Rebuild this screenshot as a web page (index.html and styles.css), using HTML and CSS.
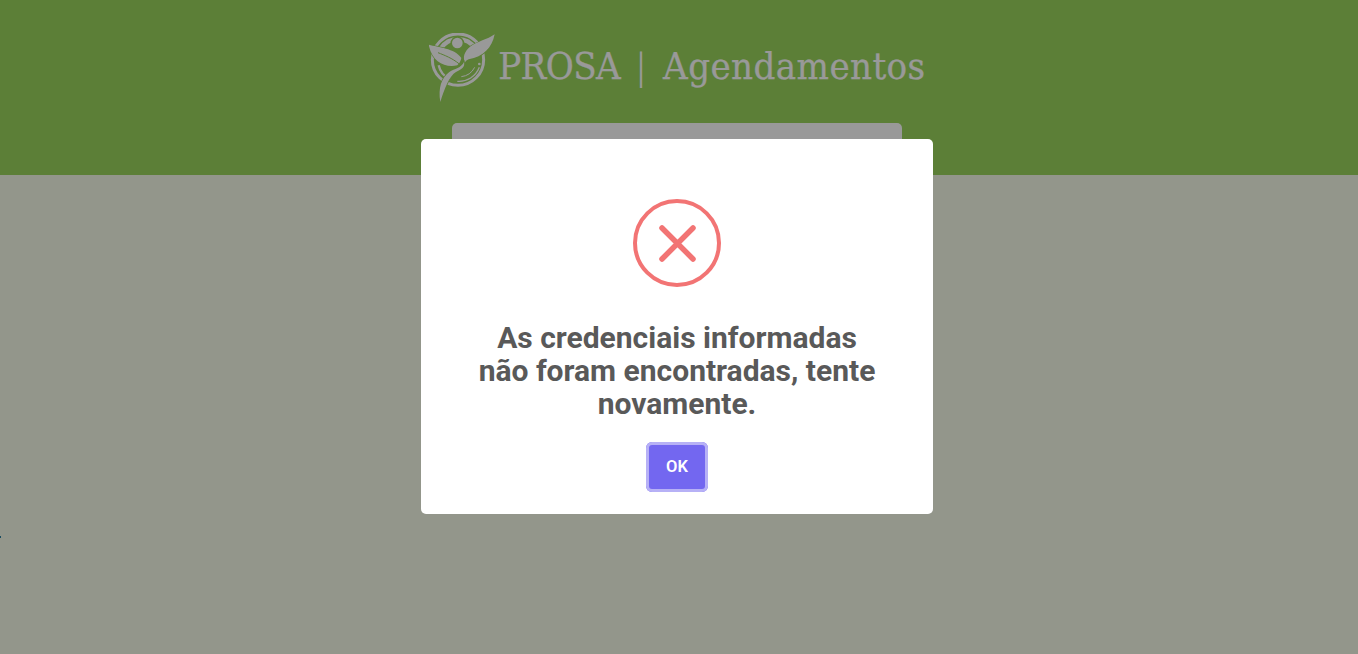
FILE: index.html
```html
<!DOCTYPE html>
<html lang="pt">
<head>
<meta charset="utf-8">
<title>PROSA | Agendamentos</title>
<link rel="stylesheet" href="styles.css">
</head>
<body>
<header class="hero">
  <div class="brand">
    <svg class="logo" viewBox="15 25 200 210" aria-hidden="true">
      <g fill="none" stroke="#fff">
        <circle cx="102" cy="105" r="77" stroke-width="9"/>
        <path d="M50 72A62 62 0 0 1 154 72" stroke-width="13"/>
        <path d="M44 122A60 60 0 0 0 78 164" stroke-width="7"/>
        <path d="M166 128A65 65 0 0 1 100 170" stroke-width="4"/>
        <path d="M152 128A52 52 0 0 1 112 156" stroke-width="3"/>
      </g>
      <circle cx="100" cy="56" r="21" fill="#99d45c"/>
      <circle cx="100" cy="55" r="16" fill="#fff"/>
      <circle cx="166" cy="118" r="4" fill="#fff"/>
      <g fill="#fff" stroke="#99d45c" stroke-width="4" paint-order="stroke">
        <path d="M14 60C40 68 92 70 112 100 110 110 106 116 100 122 62 130 24 112 14 60Z"/>
        <path d="M212 29C204 70 178 96 134 104 128 106 124 110 122 116 116 100 120 80 140 65 160 50 190 45 212 29Z"/>
        <path d="M120 112C124 128 112 134 96 142 76 154 62 190 49 232 42 190 52 160 76 142 92 132 112 130 120 112Z"/>
      </g>
      <path fill="none" stroke="#99d45c" stroke-width="3" d="M42 84C62 92 84 100 106 118"/>
      <path fill="none" stroke="#99d45c" stroke-width="3" d="M112 82C116 92 118 100 120 110"/>
    </svg>
    <h1 class="title"><span class="name">PROSA</span><span class="bar">|</span><span class="product">Agendamentos</span></h1>
  </div>
  <div class="login-card"></div>
</header>
<main class="content"></main>
<span class="speck"></span>
<div class="overlay">
  <section class="dialog" role="alertdialog">
    <svg class="error-icon" viewBox="0 0 88 88" aria-hidden="true">
      <circle cx="44" cy="44" r="42" fill="none" stroke="#f27474" stroke-width="4"/>
      <path d="M29 29L60 60M60 29L29 60" fill="none" stroke="#f27474" stroke-width="5.5" stroke-linecap="round"/>
    </svg>
    <h2 class="message">As credenciais informadas não foram encontradas, tente novamente.</h2>
    <button class="ok" type="button">OK</button>
  </section>
</div>
</body>
</html>
```
FILE: styles.css
```css
* { box-sizing: border-box; }
html, body { margin: 0; height: 100%; }
body {
  display: flex;
  flex-direction: column;
  height: 654px;
  overflow: hidden;
  background: #f5fae8;
  font-family: Roboto, sans-serif;
}
.hero {
  flex: 0 0 175px;
  background: #99d45c;
  display: flex;
  flex-direction: column;
  align-items: center;
  overflow: hidden;
  padding-right: 4px;
}
.brand {
  display: flex;
  align-items: flex-start;
  gap: 3px;
  margin-top: 33px;
  height: 70px;
}
.logo { width: 66.67px; height: 70px; display: block; flex: none; }
.title {
  margin: 0;
  height: 66px;
  display: flex;
  align-items: baseline;
  font-family: "DejaVu Serif Condensed", "DejaVu Serif", serif;
  font-weight: 400;
  font-size: 38px;
  line-height: 66px;
  color: #fff;
  white-space: nowrap;
  -webkit-text-stroke: .25px #fff;
}
.name { letter-spacing: -.6px; }
.bar {
  font-family: "Liberation Serif", serif;
  margin: 0 18px 0 17px;
  font-size: 40px;
  font-weight: 400;
  -webkit-text-stroke: 0;
}
.product { letter-spacing: .4px; }
.login-card {
  width: 450px;
  height: 80px;
  margin-top: 20px;
  background: #fff;
  border-radius: 5px;
  flex: none;
}
.content { flex: 1; }
.speck {
  position: absolute;
  left: 0;
  top: 536px;
  width: 1px;
  height: 2px;
  background: #2a7fa0;
}
.overlay {
  position: absolute;
  inset: 0;
  background: rgba(0, 0, 0, .4);
  display: flex;
  justify-content: center;
  align-items: flex-start;
  padding-top: 139px;
}
.dialog {
  width: 512px;
  height: 375px;
  background: #fff;
  border-radius: 5px;
  padding: 60px 40px 0;
  display: flex;
  flex-direction: column;
  align-items: center;
  margin-left: -4px;
}
.error-icon { width: 88px; height: 88px; display: block; flex: none; }
.message {
  margin: 34px 0 0;
  color: #595959;
  font-size: 30px;
  font-weight: 700;
  line-height: 33px;
  text-align: center;
  width: 400px;
}
.ok {
  margin-top: 22px;
  width: 62px;
  height: 50px;
  border: 0;
  border-radius: 6px;
  background: #7367f0;
  box-shadow: inset 0 0 0 3px #b7b1f6;
  color: #fff;
  font: 600 16.5px Roboto, sans-serif;
  padding: 0 0 2px;
}
```
